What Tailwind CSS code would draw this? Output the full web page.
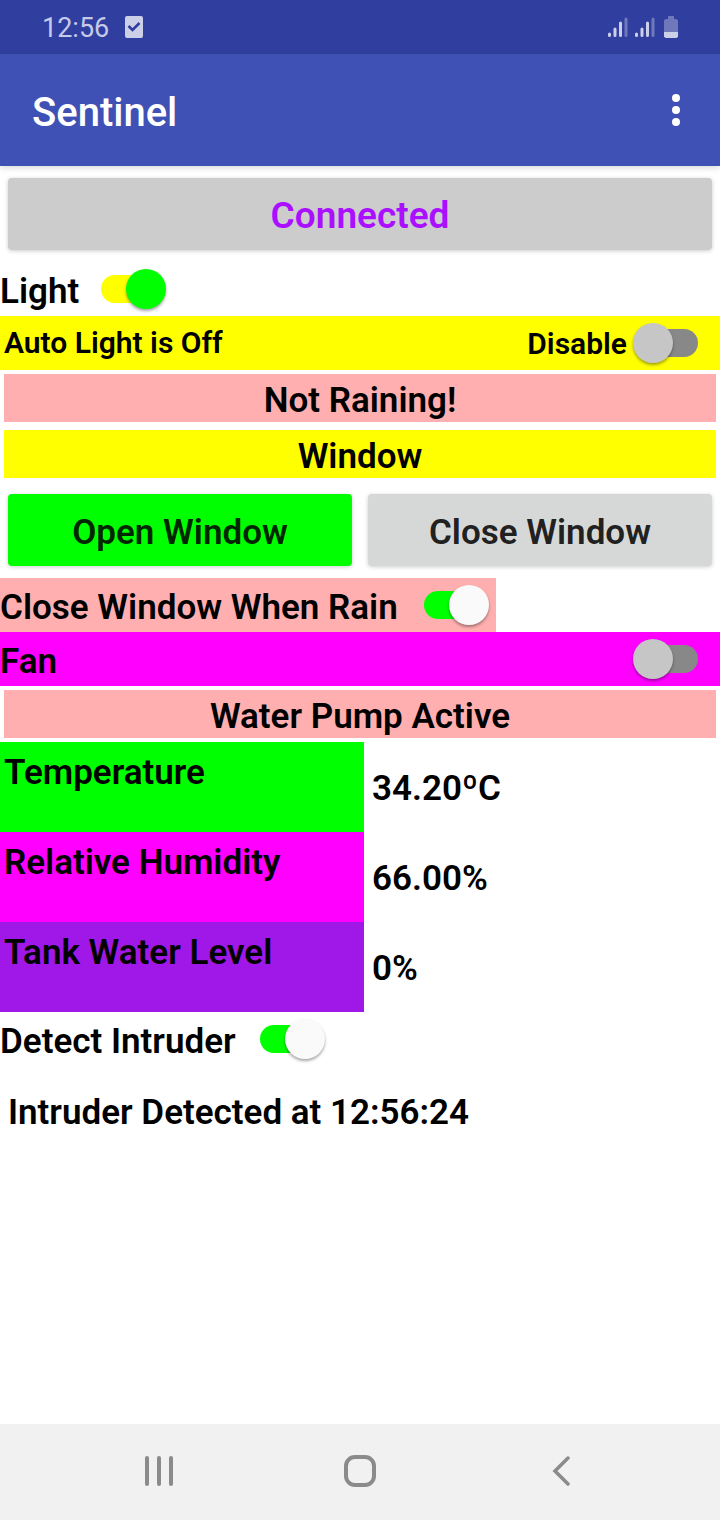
<!DOCTYPE html>
<html lang="en">
<head>
<meta charset="utf-8">
<meta name="viewport" content="width=device-width, initial-scale=1">
<title>Sentinel</title>
<script src="https://cdn.jsdelivr.net/npm/@tailwindcss/browser@4"></script>
</head>
<body class="flex min-h-screen flex-col bg-white font-['Roboto',sans-serif] text-[35px] leading-[42px] font-semibold text-black">

<!-- Status bar -->
<div class="flex h-[54px] items-center justify-between bg-[#303f9f] px-[42px]">
  <div class="flex items-center gap-4">
    <span class="pt-[2px] text-[27px] leading-8 font-normal text-[#c5cae9]">12:56</span>
    <svg class="h-[22px] w-[18px]" viewBox="0 0 18 22" aria-hidden="true"><rect width="18" height="22" rx="2" fill="#cbcfe7"/><path d="M3.500 10l4 4 7-7" fill="none" stroke="#303f9f" stroke-width="2.500"/></svg>
  </div>
  <div class="flex items-center gap-[7px]">
    <svg class="h-[22px] w-5" viewBox="0 0 20 22" stroke="#cbcfe7" stroke-width="3" stroke-linecap="round" aria-hidden="true"><path d="M1.500 18v1.500M7 13v6.500M12.500 7v12.500"/><path d="M18 3v16.500" stroke="#6e78bb"/></svg>
    <svg class="h-[22px] w-5" viewBox="0 0 20 22" stroke="#cbcfe7" stroke-width="3" stroke-linecap="round" aria-hidden="true"><path d="M1.500 18v1.500M7 13v6.500M12.500 7v12.500"/><path d="M18 3v16.500" stroke="#6e78bb"/></svg>
    <svg class="ml-[2px] h-[22px] w-[14px]" viewBox="0 0 14 22" aria-hidden="true"><path d="M4 0h6v3h2.500L14 4.500V16H0V4.500L1.500 3H4z" fill="#6e78bb"/><path d="M0 16h14v4.500L12.500 22h-11L0 20.500z" fill="#cbcfe7"/></svg>
  </div>
</div>

<!-- App bar -->
<header class="flex h-28 items-center justify-between bg-[#3f51b5] pr-6 pl-8 text-white shadow-[0_2px_6px_rgba(0,0,0,0.15)]">
  <h1 class="pt-[6px] text-[40px] leading-[48px] font-medium">Sentinel</h1>
  <button type="button" aria-label="More options" class="flex h-12 w-10 items-center justify-center">
    <svg class="h-8 w-2" viewBox="0 0 8 32" fill="#fff" aria-hidden="true"><circle cx="4" cy="4" r="4"/><circle cx="4" cy="16" r="4"/><circle cx="4" cy="28" r="4"/></svg>
  </button>
</header>

<main class="flex-1">
  <div class="px-2 py-3">
    <button type="button" class="block h-[72px] w-full rounded-sm bg-[#cccccc] pt-[3px] text-[37px] text-[#aa10ff] shadow-[0_1px_4px_rgba(0,0,0,0.2)]">Connected</button>
  </div>

  <div class="flex h-[54px] items-center">
    <label for="light" class="pt-[6px]">Light</label>
    <input id="light" type="checkbox" role="switch" checked class="relative ml-[22px] h-10 w-[65px] appearance-none before:absolute before:top-[6px] before:left-0 before:h-7 before:w-[60px] before:rounded-full before:bg-[#ffff00] after:absolute after:top-0 after:right-0 after:size-10 after:rounded-full after:bg-[#00ff00] after:shadow-[0_2px_3px_rgba(0,0,0,0.35)]">
  </div>

  <div class="flex h-[54px] items-center justify-between bg-[#ffff00] pr-[22px] pl-1 text-[30px]">
    <span>Auto Light is Off</span>
    <div class="flex items-center">
      <label for="auto" class="pt-[2px]">Disable</label>
      <input id="auto" type="checkbox" role="switch" class="relative ml-[6px] h-10 w-[65px] appearance-none before:absolute before:top-[6px] before:right-0 before:h-7 before:w-[60px] before:rounded-full before:bg-[#888888] after:absolute after:top-0 after:left-0 after:size-10 after:rounded-full after:bg-[#c6c6c6] after:shadow-[0_2px_3px_rgba(0,0,0,0.35)]">
    </div>
  </div>

  <p class="m-1 h-12 bg-[#ffafaf] pt-[6px] text-center">Not Raining!</p>
  <p class="mx-1 mt-2 mb-1 h-12 bg-[#ffff00] pt-[6px] text-center">Window</p>

  <div class="grid grid-cols-2 gap-4 px-2 py-3">
    <button type="button" class="h-[72px] rounded-sm bg-[#00ff00] pt-[5px] text-black/87 shadow-[0_1px_4px_rgba(0,0,0,0.2)]">Open Window</button>
    <button type="button" class="h-[72px] rounded-sm bg-[#d6d7d7] pt-[5px] text-black/87 shadow-[0_1px_4px_rgba(0,0,0,0.2)]">Close Window</button>
  </div>

  <div class="flex h-[54px] w-fit items-center bg-[#ffafaf] pr-[7px]">
    <label for="rain" class="pt-[6px]">Close Window When Rain</label>
    <input id="rain" type="checkbox" role="switch" checked class="relative ml-[26px] h-10 w-[65px] appearance-none before:absolute before:top-[6px] before:left-0 before:h-7 before:w-[60px] before:rounded-full before:bg-[#00ff00] after:absolute after:top-0 after:right-0 after:size-10 after:rounded-full after:bg-[#fafafa] after:shadow-[0_2px_3px_rgba(0,0,0,0.35)]">
  </div>

  <div class="flex h-[54px] items-center justify-between bg-[#ff00ff] pr-[22px]">
    <label for="fan" class="pt-[6px]">Fan</label>
    <input id="fan" type="checkbox" role="switch" class="relative h-10 w-[65px] appearance-none before:absolute before:top-[6px] before:right-0 before:h-7 before:w-[60px] before:rounded-full before:bg-[#888888] after:absolute after:top-0 after:left-0 after:size-10 after:rounded-full after:bg-[#c6c6c6] after:shadow-[0_2px_3px_rgba(0,0,0,0.35)]">
  </div>

  <p class="m-1 h-12 bg-[#ffafaf] pt-[6px] text-center">Water Pump Active</p>

  <table class="w-full table-fixed border-collapse text-left">
    <tbody>
      <tr class="h-[90px]">
        <th scope="row" class="w-[364px] bg-[#00ff00] px-1 pt-[10px] align-top font-semibold">Temperature</th>
        <td class="px-2 pt-1">34.20ºC</td>
      </tr>
      <tr class="h-[90px]">
        <th scope="row" class="bg-[#ff00ff] px-1 pt-[10px] align-top font-semibold">Relative Humidity</th>
        <td class="px-2 pt-1">66.00%</td>
      </tr>
      <tr class="h-[90px]">
        <th scope="row" class="bg-[#a018e8] px-1 pt-[10px] align-top font-semibold">Tank Water Level</th>
        <td class="px-2 pt-1">0%</td>
      </tr>
    </tbody>
  </table>

  <div class="flex h-[54px] items-center">
    <label for="intruder" class="pt-[6px]">Detect Intruder</label>
    <input id="intruder" type="checkbox" role="switch" checked class="relative ml-6 h-10 w-[65px] appearance-none before:absolute before:top-[6px] before:left-0 before:h-7 before:w-[60px] before:rounded-full before:bg-[#00ff00] after:absolute after:top-0 after:right-0 after:size-10 after:rounded-full after:bg-[#fafafa] after:shadow-[0_2px_3px_rgba(0,0,0,0.35)]">
  </div>

  <p class="px-2 pt-[26px]">Intruder Detected at 12:56:24</p>
</main>

<!-- System navigation -->
<nav class="grid h-24 grid-cols-3 items-center bg-[#f1f1f1] px-[58px] pb-[2px]">
  <button type="button" aria-label="Recent apps" class="flex h-12 items-center justify-center">
    <svg class="h-[30px] w-7" viewBox="0 0 28 30" stroke="#8b8b8b" stroke-width="4" stroke-linecap="round" aria-hidden="true"><path d="M2 2v26M14 2v26M26 2v26"/></svg>
  </button>
  <button type="button" aria-label="Home" class="flex h-12 items-center justify-center">
    <svg class="size-8" viewBox="0 0 32 32" fill="none" stroke="#8b8b8b" stroke-width="4" aria-hidden="true"><rect x="2" y="2" width="28" height="28" rx="9"/></svg>
  </button>
  <button type="button" aria-label="Back" class="flex h-12 items-center justify-center">
    <svg class="h-[30px] w-[18px]" viewBox="0 0 18 30" fill="none" stroke="#8b8b8b" stroke-width="3.500" stroke-linecap="round" aria-hidden="true"><path d="M16 2L3 15l13 13"/></svg>
  </button>
</nav>
</body>
</html>
